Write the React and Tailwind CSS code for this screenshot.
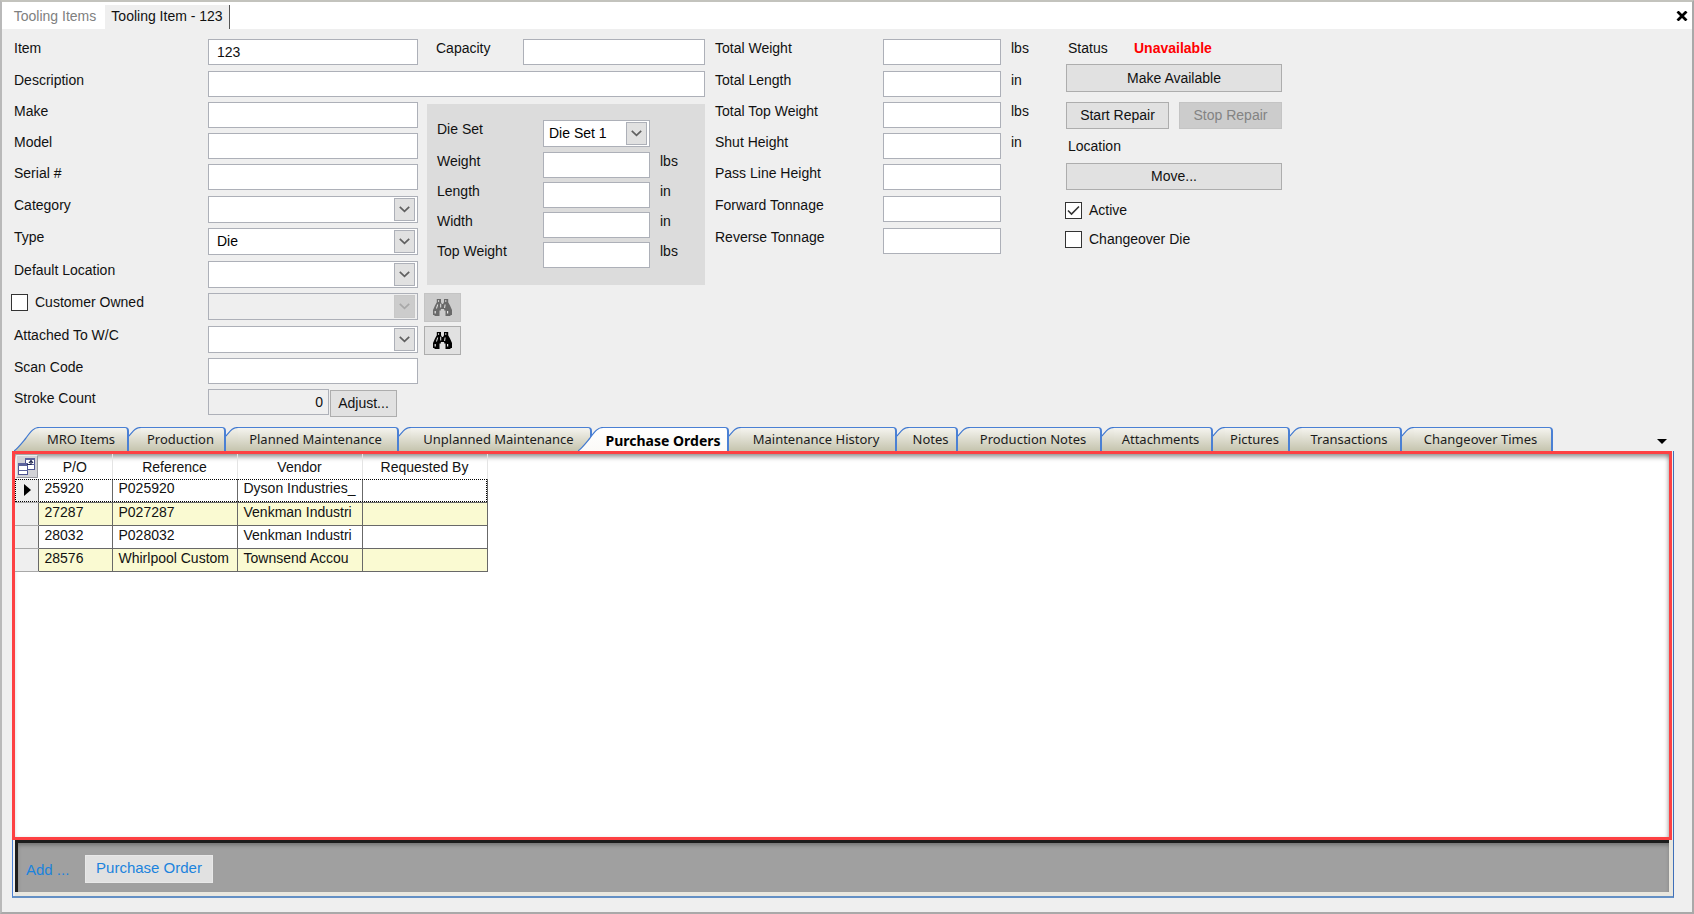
import React, { useId } from "react";

const Label = ({ children, className = "", ...rest }) => (
  <label className={`block leading-[18px] whitespace-nowrap ${className}`} {...rest}>
    {children}
  </label>
);

const TextBox = ({ className = "", ...rest }) => (
  <input
    type="text"
    className={`h-[26px] rounded-none border border-[#adb0b8] bg-white pl-2 outline-none ${className}`}
    {...rest}
  />
);

function Combo({ id, options = [""], disabled = false, className = "", inset = "pl-2", ...rest }) {
  return (
    <div className={`relative h-[27px] ${className}`}>
      <select
        id={id}
        disabled={disabled}
        className={`h-full w-full appearance-none rounded-none border border-[#adb0b8] bg-white ${inset} text-black opacity-100 outline-none disabled:bg-[#efefef]`}
        {...rest}
      >
        {options.map((o) => (
          <option key={o}>{o}</option>
        ))}
      </select>
      <span
        className={`pointer-events-none absolute top-[2px] right-[3px] flex h-[23px] w-[21px] items-center justify-center border ${
          disabled ? "border-[#c8c8c8] bg-[#cccccc]" : "border-[#adb0b8] bg-[#e1e1e1]"
        }`}
      >
        <svg width="11" height="7" viewBox="0 0 11 7" fill="none" stroke={disabled ? "#a8a8a8" : "#606060"} strokeWidth="1.7">
          <path d="M0.8 0.8 L5.5 5.4 L10.2 0.8" />
        </svg>
      </span>
    </div>
  );
}

const PushButton = ({ className = "", children, ...rest }) => (
  <button
    type="button"
    className={`border border-[#adadad] bg-[#e1e1e1] text-center whitespace-nowrap disabled:border-[#c4c4c4] disabled:bg-[#cccccc] disabled:text-[#838383] ${className}`}
    {...rest}
  >
    {children}
  </button>
);

function CheckBox({ id, label, defaultChecked }) {
  return (
    <div className="flex items-center">
      <span className="relative block size-[17px]">
        <input
          id={id}
          type="checkbox"
          defaultChecked={defaultChecked}
          className="peer block size-[17px] appearance-none border border-[#333333] bg-white"
        />
        <svg
          className="pointer-events-none absolute inset-0 hidden peer-checked:block"
          width="17"
          height="17"
          viewBox="0 0 17 17"
          fill="none"
          stroke="#333"
          strokeWidth="1.6"
        >
          <path d="M3 8.5 L6.5 12 L14 4.5" />
        </svg>
      </span>
      <Label htmlFor={id} className="pl-[7px]">
        {label}
      </Label>
    </div>
  );
}

const Binoculars = ({ color }) => (
  <svg width="19" height="17" viewBox="0 0 19 17" fill={color}>
    <path d="M3.8 0H8V3.2L9 5H10L11 3.2V0H15.2V3.2L17 6.500L19 11V16H17.500V17H12.500V11.500H11.200V10H7.800V11.500H6.500V17H1.500V16H0V11L2 6.500L3.800 3.200Z" />
    <g fill="#e8e8e8">
      <path d="M5 1.300h1.100v1.500H5zM12.200 1.300h1.100v1.500h-1.100zM4.200 5.500h1L4 9.500H3zM1.600 12h1.200v2.600H1.600zM7.200 4.800h1v3.600h-1zM11.600 5.500h1l-.5 3.600h-1zM14 12h1.200v2.600H14z" />
    </g>
  </svg>
);

const Unit = ({ children }) => <span className="pl-[10px] leading-[18px]">{children}</span>;

const dieFields = [
  ["Weight", "lbs"],
  ["Length", "in"],
  ["Width", "in"],
  ["Top Weight", "lbs"],
];

function DieSetPanel() {
  return (
    <fieldset className="col-start-3 row-span-6 row-start-3 mt-[2px] ml-[9px] grid min-w-0 grid-cols-[106px_107px_1fr] grid-rows-[32px_30px_30px_30px_30px] items-start self-start bg-[#dcdcdc] pt-4 pb-[13px] pl-[10px]">
      <Label htmlFor="die-set">Die Set</Label>
      <Combo id="die-set" options={["Die Set 1"]} inset="pl-[5px]" />
      <span />
      {dieFields.map(([name, unit]) => (
        <React.Fragment key={name}>
          <Label htmlFor={`die-${name}`}>{name}</Label>
          <TextBox id={`die-${name}`} />
          <Unit>{unit}</Unit>
        </React.Fragment>
      ))}
    </fieldset>
  );
}

function ItemFields() {
  return (
    <div className="grid w-[691px] shrink-0 grid-cols-[194px_210px_minmax(0,1fr)] grid-rows-[32px_31px_31px_31px_32px_32px_33px_32px_33px_32px_31px_38px] items-start">
      <Label htmlFor="item">Item</Label>
      <TextBox id="item" defaultValue="123" />
      <div className="flex items-start pl-[18px]">
        <Label htmlFor="capacity" className="w-[87px]">
          Capacity
        </Label>
        <TextBox id="capacity" className="min-w-0 flex-1" />
      </div>

      <Label htmlFor="description">Description</Label>
      <TextBox id="description" className="col-span-2" />

      <Label htmlFor="make" className="col-start-1">
        Make
      </Label>
      <TextBox id="make" />
      <DieSetPanel />

      <Label htmlFor="model" className="col-start-1">
        Model
      </Label>
      <TextBox id="model" />

      <Label htmlFor="serial" className="col-start-1">
        Serial #
      </Label>
      <TextBox id="serial" />

      <Label htmlFor="category" className="col-start-1">
        Category
      </Label>
      <Combo id="category" />

      <Label htmlFor="type" className="col-start-1">
        Type
      </Label>
      <Combo id="type" options={["Die"]} />

      <Label htmlFor="default-location" className="col-start-1">
        Default Location
      </Label>
      <Combo id="default-location" />

      <div className="col-start-1 -ml-[3px]">
        <CheckBox id="customer-owned" label="Customer Owned" />
      </div>
      <Combo id="customer" disabled aria-label="Customer" />
      <PushButton disabled aria-label="Find customer" className="ml-[6px] flex h-[29px] w-[37px] items-center justify-center">
        <Binoculars color="#6a6a6a" />
      </PushButton>

      <Label htmlFor="attached">Attached To W/C</Label>
      <Combo id="attached" />
      <PushButton aria-label="Find work center" className="ml-[6px] flex h-[29px] w-[37px] items-center justify-center">
        <Binoculars color="#000000" />
      </PushButton>

      <Label htmlFor="scan" className="col-start-1">
        Scan Code
      </Label>
      <TextBox id="scan" />

      <Label htmlFor="strokes" className="col-start-1">
        Stroke Count
      </Label>
      <div className="flex items-start gap-px">
        <input
          id="strokes"
          readOnly
          value="0"
          className="h-[26px] w-[121px] rounded-none border border-[#adb0b8] bg-[#efefef] pr-[5px] text-right outline-none"
        />
        <PushButton className="mt-px h-[27px] w-[67px]">Adjust...</PushButton>
      </div>
    </div>
  );
}

const totals = [
  ["Total Weight", "lbs"],
  ["Total Length", "in"],
  ["Total Top Weight", "lbs"],
  ["Shut Height", "in"],
  ["Pass Line Height", ""],
  ["Forward Tonnage", ""],
  ["Reverse Tonnage", ""],
];

function Totals() {
  return (
    <div className="ml-[10px] grid w-[351px] shrink-0 grid-cols-[168px_118px_1fr] grid-rows-[32px_31px_31px_31px_32px_32px_33px] content-start items-start">
      {totals.map(([name, unit]) => (
        <React.Fragment key={name}>
          <Label htmlFor={name}>{name}</Label>
          <TextBox id={name} />
          <Unit>{unit}</Unit>
        </React.Fragment>
      ))}
    </div>
  );
}

function StatusPanel() {
  return (
    <div className="flex w-[216px] shrink-0 flex-col">
      <div className="flex pl-[2px] leading-[18px]">
        <span className="w-[66px]">Status</span>
        <strong className="font-bold text-[#ff0000]">Unavailable</strong>
      </div>
      <PushButton className="mt-[7px] h-[28px]">Make Available</PushButton>
      <div className="mt-[10px] flex justify-between">
        <PushButton className="h-[27px] w-[103px]">Start Repair</PushButton>
        <PushButton disabled className="h-[27px] w-[103px]">
          Stop Repair
        </PushButton>
      </div>
      <span className="mt-[8px] pl-[2px] leading-[18px]">Location</span>
      <PushButton className="mt-[8px] h-[27px]">Move...</PushButton>
      <div className="mt-[11px] -ml-px flex flex-col gap-[11px]">
        <CheckBox id="active" label="Active" defaultChecked />
        <CheckBox id="changeover" label="Changeover Die" />
      </div>
    </div>
  );
}

const tabs = [
  { name: "MRO Items", width: "w-[115px]", slope: true },
  { name: "Production", width: "w-[97px]" },
  { name: "Planned Maintenance", width: "w-[173px]" },
  { name: "Unplanned Maintenance", width: "w-[193px]" },
  { name: "Purchase Orders", width: "w-[151px] -ml-[14px]", slope: true, active: true },
  { name: "Maintenance History", width: "w-[168px]" },
  { name: "Notes", width: "w-[61px]" },
  { name: "Production Notes", width: "w-[144px]" },
  { name: "Attachments", width: "w-[111px]" },
  { name: "Pictures", width: "w-[77px]" },
  { name: "Transactions", width: "w-[112px]" },
  { name: "Changeover Times", width: "w-[151px]" },
];

function Tab({ name, width, slope, active }) {
  const id = useId();
  const w = slope ? 25 : 12;
  const edge = slope ? "M0 24 C4 21 7 17 12 11 C17 4 20 0.500 25 0.500" : "M0 9 C4 4.500 6 0.500 12 0.500";
  const close = slope ? " V24 Z" : " V24 H0 Z";
  return (
    <button
      type="button"
      role="tab"
      aria-selected={!!active}
      className={`relative flex h-6 shrink-0 ${width} ${active ? "z-10 text-[14px] font-bold text-black" : "text-[13px] text-[#1c1c1c]"}`}
    >
      <svg width={w} height="24" viewBox={`0 0 ${w} 24`} className="shrink-0">
        <defs>
          <linearGradient id={id} x1="0" y1="0" x2="0" y2="24" gradientUnits="userSpaceOnUse">
            <stop offset="0" stopColor={active ? "#ffffff" : "#f5f4ef"} />
            <stop offset="1" stopColor={active ? "#fbfaf7" : "#c5c4ae"} />
          </linearGradient>
        </defs>
        <path d={edge + close} fill={`url(#${id})`} />
        <path d={edge} fill="none" stroke="#3f78d0" strokeWidth="1.2" />
      </svg>
      <span
        className={`flex h-6 min-w-0 flex-1 items-center justify-center rounded-tr-[4px] border-t border-r-2 border-[#4a80d4] bg-linear-to-b pt-px pr-1 whitespace-nowrap ${
          active ? "from-[#ffffff] to-[#fbfaf7]" : "from-[#f5f4ef] to-[#c5c4ae]"
        }`}
      >
        {name}
      </span>
    </button>
  );
}

const orders = [
  ["25920", "P025920", "Dyson Industries_", ""],
  ["27287", "P027287", "Venkman Industri", ""],
  ["28032", "P028032", "Venkman Industri", ""],
  ["28576", "Whirlpool Custom", "Townsend Accou", ""],
];

const FieldChooser = () => (
  <svg width="22" height="23" viewBox="0 0 22 23" className="ml-px block">
    <path d="M0 0h22v23H0z" fill="#d2d2d6" />
    <path d="M0.500 22.500V0.500H21.500" fill="none" stroke="#ececec" />
    <path d="M21.500 0.500V22.500H0.500" fill="none" stroke="#9a9aa0" />
    <rect x="9.500" y="3.500" width="9" height="11" fill="#fff" stroke="#4e5591" />
    <path d="M9 3h10v2H9zM9 9h10v1H9z" fill="#5c639c" />
    <rect x="2.500" y="8.500" width="9" height="11" fill="#fff" stroke="#4e5591" />
    <path d="M2 8h10v3H2zM2 15h10v1H2z" fill="#5c639c" />
    <path d="M11 9.500h4V6m-2 2l2-2.500 2 2.500" fill="none" stroke="#20264f" strokeWidth="1.200" />
  </svg>
);

function OrdersTable() {
  return (
    <table className="w-[472px] table-fixed border-collapse text-left">
      <colgroup>
        <col className="w-[23px]" />
        <col className="w-[74px]" />
        <col className="w-[125px]" />
        <col className="w-[125px]" />
        <col className="w-[125px]" />
      </colgroup>
      <thead>
        <tr className="h-[25px]">
          <th className="p-0" aria-label="Columns">
            <FieldChooser />
          </th>
          {["P/O", "Reference", "Vendor", "Requested By"].map((h) => (
            <th key={h} className="border-r border-r-[#e4e4e4] p-0 text-center leading-[18px] font-normal">
              {h}
            </th>
          ))}
        </tr>
      </thead>
      <tbody>
        {orders.map((row, i) => (
          <tr
            key={row[0]}
            className={`h-[23px] ${i % 2 ? "bg-[#fafad2]" : "bg-white"} ${i === 0 ? "outline-1 -outline-offset-1 outline-black outline-dotted" : ""}`}
          >
            <td className="border-b border-b-[#a8a8a8] bg-[#efefef] p-0">
              {i === 0 && (
                <svg width="7" height="12" viewBox="0 0 7 12" className="ml-[9px]">
                  <path d="M0 0L7 6L0 12Z" fill="#000" />
                </svg>
              )}
            </td>
            {row.map((cell, j) => (
              <td
                key={j}
                className="overflow-hidden border-x border-b border-[#686868] p-0 pb-[4px] pl-[6px] leading-[18px] whitespace-nowrap"
              >
                {cell}
              </td>
            ))}
          </tr>
        ))}
      </tbody>
    </table>
  );
}

export default function App() {
  return (
    <div className="flex min-h-screen flex-col border-2 border-t-[#c3c3bd] border-r-[#a9a9a9] border-b-[#a9a9a9] border-l-[#b9b9b9] bg-[#efefef] font-['Liberation_Sans',Arial,sans-serif] text-[14px] text-[#111111]">
      <header className="flex h-[27px] items-stretch bg-white">
        <button type="button" className="w-[103px] pt-[2px] pl-[3px] text-center text-[#808080]">
          Tooling Items
        </button>
        <button type="button" className="mt-[3px] w-[125px] border-r border-[#555555] bg-[#efefef] pb-px text-center whitespace-nowrap">
          Tooling Item - 123
        </button>
        <button type="button" aria-label="Close" className="mr-[4px] ml-auto self-center">
          <svg width="12" height="10" viewBox="0 0 12 10" fill="none" stroke="#000" strokeWidth="2.800">
            <path d="M1.500 0.500L10.500 9.500M10.500 0.500L1.500 9.500" />
          </svg>
        </button>
      </header>

      <form className="flex items-start pt-[10px] pl-3">
        <ItemFields />
        <Totals />
        <StatusPanel />
      </form>

      <main className="mr-[18px] mb-[14px] ml-[10px] flex flex-1 flex-col">
        <div role="tablist" className="flex pl-[2px] font-['Noto_Sans','Open_Sans',sans-serif]">
          {tabs.map((t) => (
            <Tab key={t.name} {...t} />
          ))}
          <button type="button" aria-label="More tabs" className="mr-[7px] ml-auto pt-[5px]">
            <svg width="10" height="5" viewBox="0 0 10 5">
              <path d="M0 0H10L5 5Z" fill="#000" />
            </svg>
          </button>
        </div>

        <div className="flex flex-1 flex-col border-r border-b-2 border-l border-r-[#3f6fb8] border-b-[#6590c4] border-l-[#4a80d4]">
          <section className="mr-px -ml-px flex-1 border-[3px] border-[#fd4143] bg-white shadow-[inset_0_5px_5px_-2px_rgba(0,0,0,0.4),inset_-3px_0_4px_-2px_rgba(0,0,0,0.25)]">
            <OrdersTable />
          </section>
          <footer className="mr-[4px] mb-[4px] ml-[2px] flex h-[52px] items-center border-t-[3px] border-l-[3px] border-[#1c1c1c] bg-[#a0a0a0] pt-[2px] pl-[8px] text-[15px] text-[#1b83dd] shadow-[2px_2px_0_2px_#e9e7df,inset_0_3px_4px_-1px_rgba(0,0,0,0.3)]">
            <span className="w-[59px] pt-[3px]">Add ...</span>
            <button type="button" className="h-[28px] w-[128px] border border-[#e8e8e8] bg-[#e1e1e1]">
              Purchase Order
            </button>
          </footer>
        </div>
      </main>
    </div>
  );
}
